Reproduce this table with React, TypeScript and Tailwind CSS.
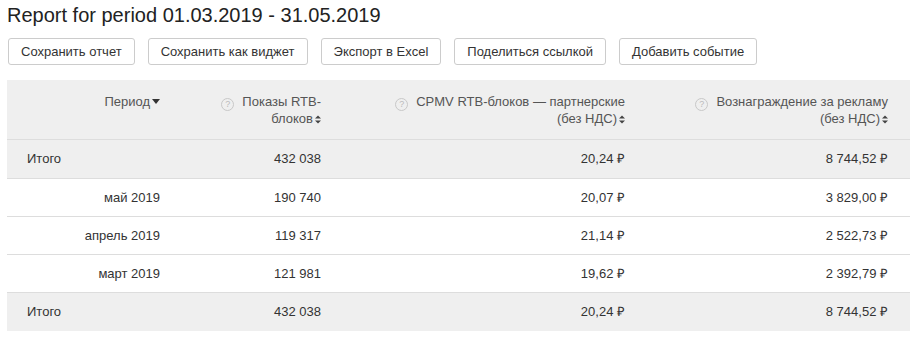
import React from "react";

const Q = () => (
  <span className="inline-flex items-center justify-center w-[13px] h-[13px] rounded-full border border-[#c8c8c8] text-[9px] leading-none text-[#bbb] mr-[8px] align-[-1px]">
    ?
  </span>
);

const SortBoth = () => (
  <svg width="6" height="9" viewBox="0 0 6 9" className="inline-block ml-[2px] align-[-1px]">
    <path d="M0 3.5 L3 0.5 L6 3.5 Z" fill="#444" />
    <path d="M0 5.5 L3 8.5 L6 5.5 Z" fill="#444" />
  </svg>
);

const SortDown = () => (
  <svg width="8" height="5" viewBox="0 0 8 5" className="inline-block ml-[2px] align-[2px]">
    <path d="M0 0 L8 0 L4 5 Z" fill="#333" />
  </svg>
);

const rows = [
  { p: "май 2019", a: "190 740", b: "20,07 ₽", c: "3 829,00 ₽" },
  { p: "апрель 2019", a: "119 317", b: "21,14 ₽", c: "2 522,73 ₽" },
  { p: "март 2019", a: "121 981", b: "19,62 ₽", c: "2 392,79 ₽" },
];

const grid = "grid grid-cols-[153px_161px_304px_263px] pr-[22px]";

export default function App() {
  return (
    <div
      className="w-[917px] h-[337px] bg-white px-[7px] pt-[4px] text-[#333]"
      style={{ fontFamily: '"Liberation Sans", Arial, sans-serif' }}
    >
      <h1 className="text-[20px] leading-[23px] text-[#222] font-normal">
        Report for period 01.03.2019 - 31.05.2019
      </h1>
      <div className="flex gap-[13px] mt-[11px] pl-[1px]">
        {["Сохранить отчет", "Сохранить как виджет", "Экспорт в Excel", "Поделиться ссылкой", "Добавить событие"].map((t) => (
          <button
            key={t}
            className="border border-[#ccc] rounded-[3px] bg-white px-[12px] py-[5px] text-[13px] leading-[15px] text-[#333]"
          >
            {t}
          </button>
        ))}
      </div>
      <div className="mt-[15px] w-[903px] text-[13px]">
        <div className={`${grid} bg-[#efefef] border-b border-[#ddd] pt-[14px] pb-[12px] leading-[16px] text-[#555]`}>
          <div className="text-right">
            Период
            <SortDown />
          </div>
          <div className="text-right">
            <Q />
            Показы RTB-
            <br />
            блоков
            <SortBoth />
          </div>
          <div className="text-right">
            <Q />
            CPMV RTB-блоков — партнерские
            <br />
            (без НДС)
            <SortBoth />
          </div>
          <div className="text-right">
            <Q />
            Вознаграждение за рекламу
            <br />
            (без НДС)
            <SortBoth />
          </div>
        </div>
        <div className={`${grid} bg-[#efefef] border-b border-[#ddd] h-[39px] items-center`}>
          <div className="pl-[20px]">Итого</div>
          <div className="text-right">432 038</div>
          <div className="text-right">20,24 ₽</div>
          <div className="text-right">8 744,52 ₽</div>
        </div>
        {rows.map((r) => (
          <div key={r.p} className={`${grid} border-b border-[#ddd] h-[38px] items-center`}>
            <div className="text-right">{r.p}</div>
            <div className="text-right">{r.a}</div>
            <div className="text-right">{r.b}</div>
            <div className="text-right">{r.c}</div>
          </div>
        ))}
        <div className={`${grid} bg-[#efefef] h-[38px] items-center`}>
          <div className="pl-[20px]">Итого</div>
          <div className="text-right">432 038</div>
          <div className="text-right">20,24 ₽</div>
          <div className="text-right">8 744,52 ₽</div>
        </div>
      </div>
    </div>
  );
}
